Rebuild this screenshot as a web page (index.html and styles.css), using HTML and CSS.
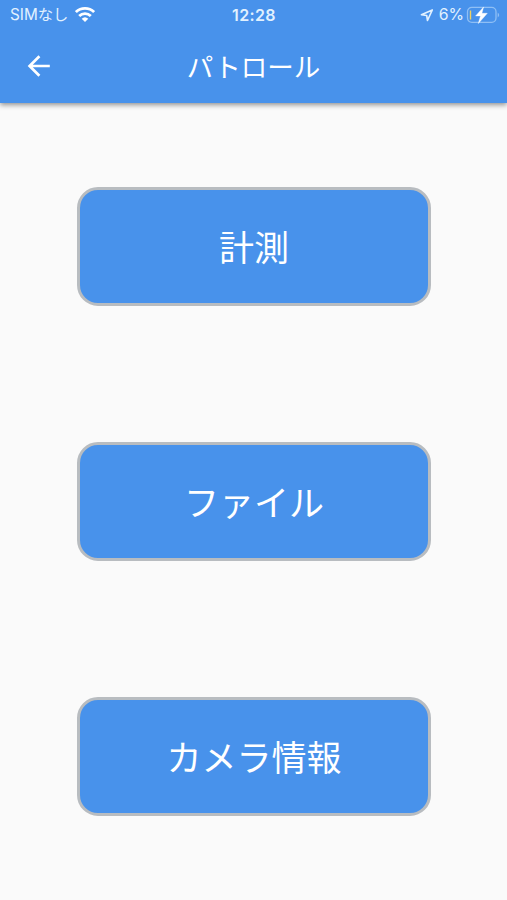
FILE: index.html
```html
<!DOCTYPE html>
<html lang="ja">
<head>
<meta charset="utf-8">
<title>パトロール</title>
<link rel="stylesheet" href="styles.css">
</head>
<body>
<header class="header">
  <div class="status">
    <div class="status-left">
      <span class="carrier">SIMなし</span>
      <svg class="wifi" width="20" height="15" viewBox="0 0 20 15" fill="none" stroke="#fff" stroke-width="2.8">
        <path d="M.9 5.1a13.1 13.1 0 0 1 18.2 0M4.2 8.9a8.4 8.4 0 0 1 11.6 0"/>
        <path d="M6.7 11.7a4.8 4.8 0 0 1 6.6 0L10 15z" fill="#fff" stroke="none"/>
      </svg>
    </div>
    <span class="time">12:28</span>
    <div class="status-right">
      <svg class="location" width="14" height="14" viewBox="0 0 14 14" fill="none" stroke="#e1f1ff" stroke-width="1.6" stroke-linejoin="round"><path d="M12.3 1.9L1.4 6.7l5.3.8.8 5z"/></svg>
      <span class="percent">6%</span>
      <svg class="battery" width="34" height="18" viewBox="0 0 34 18">
        <rect x="1.5" y="1.4" width="28.5" height="15" rx="4.3" fill="none" stroke="#8fbff5" stroke-width="1.3"/>
        <path d="M31.7 6.4q3 2.6 0 5.2z" fill="#8fbff5"/>
        <path d="M4.5 4.5v9" stroke="#f0d060" stroke-width="1.4"/>
        <path d="M17.6.9L9.6 9.9h4.9l-2.2 7.7 9-10.3h-5.4z" fill="#fff" stroke="#fff" stroke-width=".4"/>
      </svg>
    </div>
  </div>
  <div class="appbar">
    <svg class="back" width="24" height="24" viewBox="0 0 24 24" fill="none" stroke="#fff" stroke-width="2.7"><path d="M23.8 12H3.8M13.4 2.2L3.6 12l9.8 9.8"/></svg>
    <h1 class="title">パトロール</h1>
  </div>
</header>
<main class="menu">
  <button class="menu-button">計測</button>
  <button class="menu-button">ファイル</button>
  <button class="menu-button">カメラ情報</button>
</main>
</body>
</html>
```
FILE: styles.css
```css
* { box-sizing: border-box; }
body {
  margin: 0;
  height: 900px;
  display: flex;
  flex-direction: column;
  background: #fafafa;
  color: #fff;
  font-family: Inter, "Noto Sans CJK JP", sans-serif;
}
.header {
  height: 103px;
  flex: none;
  background: #4892eb;
  box-shadow: 0 2px 5px rgba(0, 0, 0, .42);
}
.status {
  height: 29px;
  display: grid;
  grid-template-columns: 1fr auto 1fr;
  align-items: center;
  padding: 1px 7px 0 10px;
  font-size: 16px;
  line-height: 28px;
  color: #e1f1ff;
}
.status-left, .status-right { display: flex; align-items: center; }
.status-right { justify-content: flex-end; }
.carrier { font-size: 15.3px; width: 58px; white-space: nowrap; }
.wifi { margin: -2px 0 0 7px; }
.time { font-size: 16px; font-weight: 600; letter-spacing: .4px; margin-left: -2px; }
.location { margin-right: 5px; }
.percent { font-size: 15.8px; margin-right: 2px; }
.battery { margin-top: -1px; }
.appbar {
  height: 74px;
  display: grid;
  grid-template-columns: 1fr auto 1fr;
  align-items: center;
  padding: 2px 26px 0;
}
.title {
  margin: 0;
  font-size: 26.5px;
  font-weight: 400;
  line-height: 40px;
}
.back { margin-top: -2px; }
.menu {
  flex: 1;
  display: flex;
  flex-direction: column;
  align-items: center;
  gap: 136px;
  padding: 84px 0 0 1px;
}
.menu-button {
  width: 354px;
  height: 119px;
  padding: 0 0 2px;
  border: 3px solid #b8bcc0;
  border-radius: 21px;
  background: #4892eb;
  color: #fff;
  font: 400 35px "Noto Sans CJK JP", sans-serif;
}
```
